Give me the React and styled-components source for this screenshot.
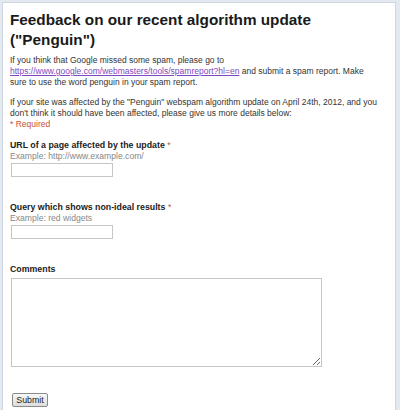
import React from 'react';
import styled, { createGlobalStyle } from 'styled-components';

const GlobalStyle = createGlobalStyle`
  html, body {
    margin: 0;
    padding: 0;
    background: #e3e9f1;
  }
  body {
    font-family: "Liberation Sans", Arial, sans-serif;
    color: #222;
  }
`;

const Page = styled.div`
  width: 400px;
  height: 410px;
  padding: 2px 4px 0 2px;
  box-sizing: border-box;
  overflow: hidden;
`;

const Card = styled.form`
  height: 100%;
  background: #fff;
  border: 1px solid #cfd6df;
  border-bottom: none;
  padding: 7px 14px 0 7px;
  box-sizing: border-box;
`;

const Title = styled.h1`
  margin: 0 0 5px;
  font-size: 15.3px;
  line-height: 20px;
  font-weight: bold;
  color: #1a1a1a;
`;

const Intro = styled.p`
  margin: 0;
  font-size: 8.5px;
  line-height: 11px;
  color: #333;

  & + & {
    margin-top: 9px;
  }

  a {
    color: #8048bd;
    text-decoration: underline;
  }
`;

const Required = styled.div`
  font-size: 8.5px;
  line-height: 11px;
  color: #c4523a;
`;

const Field = styled.div`
  margin-top: ${(p) => p.$gap}px;
`;

const Label = styled.div`
  font-size: 8.8px;
  line-height: 11px;
  font-weight: bold;
  color: #222;

  span {
    color: #c4523a;
    font-weight: normal;
  }
`;

const Help = styled.div`
  font-size: 8.6px;
  line-height: 11px;
  color: #888;
`;

const TextInput = styled.input`
  display: block;
  margin: 1px 0 0 1px;
  width: 102px;
  height: 14px;
  box-sizing: border-box;
  border: 1px solid #c6c6c6;
  padding: 0 2px;
  font-size: 8.5px;
  outline: none;
`;

const TextArea = styled.textarea`
  display: block;
  margin: 3px 0 0 1px;
  width: 311px;
  height: 89px;
  box-sizing: border-box;
  border: 1px solid #c6c6c6;
  padding: 2px;
  font-size: 8.5px;
  outline: none;
`;

const SubmitButton = styled.button`
  display: block;
  margin: 26px 0 0 2px;
  width: 36px;
  height: 14px;
  padding: 0;
  font-family: "Liberation Sans", Arial, sans-serif;
  font-size: 8.8px;
  line-height: 12px;
  color: #222;
  background: linear-gradient(#f7f7f7, #dddddd);
  border: 1px solid #8a8a8a;
  border-radius: 2px;
`;

export default function App() {
  return (
    <>
      <GlobalStyle />
      <Page>
        <Card onSubmit={(e) => e.preventDefault()}>
          <Title>Feedback on our recent algorithm update ("Penguin")</Title>
          <Intro>
            If you think that Google missed some spam, please go to{' '}
            <a href="#spam">https://www.google.com/webmasters/tools/spamreport?hl=en</a>{' '}
            and submit a spam report. Make sure to use the word penguin in your spam report.
          </Intro>
          <Intro>
            If your site was affected by the "Penguin" webspam algorithm update on April 24th,
            2012, and you don't think it should have been affected, please give us more details
            below:
          </Intro>
          <Required>* Required</Required>

          <Field $gap={10}>
            <Label>URL of a page affected by the update <span>*</span></Label>
            <Help>Example: http://www.example.com/</Help>
            <TextInput type="text" />
          </Field>

          <Field $gap={25}>
            <Label>Query which shows non-ideal results <span>*</span></Label>
            <Help>Example: red widgets</Help>
            <TextInput type="text" />
          </Field>

          <Field $gap={25}>
            <Label>Comments</Label>
            <TextArea />
          </Field>

          <SubmitButton type="submit">Submit</SubmitButton>
        </Card>
      </Page>
    </>
  );
}
